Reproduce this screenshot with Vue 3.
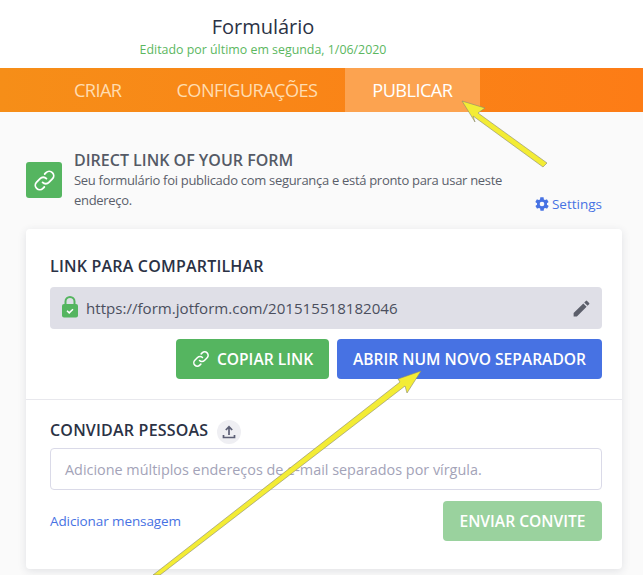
<template>
  <div class="page">
    <header class="top">
      <h1 class="form-title">Formulário</h1>
      <p class="form-edited">Editado por último em segunda, 1/06/2020</p>
    </header>

    <nav class="tabs">
      <a v-for="tab in tabs" :key="tab" class="tab" :class="{ active: tab === 'PUBLICAR' }">{{ tab }}</a>
    </nav>

    <main class="content">
      <section class="intro">
        <div class="intro-icon">
          <svg width="23" height="23" viewBox="0 0 24 24" fill="none" stroke="#fff" stroke-width="1.900" stroke-linecap="round">
            <path d="M10 14a4.600 4.600 0 0 0 6.600 0l3.600-3.600a4.600 4.600 0 0 0-6.600-6.600l-1.400 1.400" />
            <path d="M14 10a4.600 4.600 0 0 0-6.600 0l-3.600 3.600a4.600 4.600 0 0 0 6.600 6.600l1.400-1.400" />
          </svg>
        </div>
        <div class="intro-text">
          <h2>DIRECT LINK OF YOUR FORM</h2>
          <p>Seu formulário foi publicado com segurança e está pronto para usar neste endereço.</p>
        </div>
        <a class="settings">
          <svg width="16" height="16" viewBox="0 0 24 24" fill="#4772e3">
            <path d="M19.400 13c.1-.3.1-.7.1-1s0-.7-.1-1l2.100-1.600c.2-.2.3-.4.1-.7l-2-3.400c-.1-.2-.4-.3-.6-.2l-2.500 1c-.5-.4-1.100-.7-1.700-1l-.4-2.700c0-.2-.2-.4-.5-.4h-4c-.2 0-.5.2-.5.400l-.4 2.700c-.6.3-1.200.6-1.700 1l-2.500-1c-.2-.1-.5 0-.6.2l-2 3.400c-.1.300-.1.500.1.700L4.600 11c-.1.300-.1.700-.1 1s0 .7.1 1l-2.100 1.600c-.2.200-.3.400-.1.700l2 3.400c.1.200.4.300.6.200l2.500-1c.5.400 1.100.7 1.700 1l.4 2.700c0 .2.300.4.500.4h4c.3 0 .5-.2.5-.4l.4-2.700c.6-.3 1.200-.6 1.700-1l2.500 1c.2.100.5 0 .6-.2l2-3.400c.2-.3.100-.5-.1-.7L19.400 13zM12 15.500a3.500 3.500 0 1 1 0-7 3.500 3.500 0 0 1 0 7z" />
          </svg>
          Settings
        </a>
      </section>

      <section class="card">
        <div class="share">
          <h3 class="label">LINK PARA COMPARTILHAR</h3>
          <div class="url-box">
            <svg class="lock" width="18" height="24" viewBox="0 0 18 24">
              <path d="M4.500 10V6.500a4.500 4.500 0 0 1 9 0V10" fill="none" stroke="#55b560" stroke-width="2" />
              <rect x="1" y="9" width="16" height="13.500" rx="2" fill="#55b560" />
              <path d="M6 15.800l2.200 2.100 3.800-3.600" fill="none" stroke="#fff" stroke-width="1.500" />
            </svg>
            <span class="url">https://form.jotform.com/201515518182046</span>
            <svg class="pencil" width="21" height="21" viewBox="0 0 24 24" fill="#5c5f6b">
              <path d="M3 17.250V21h3.750L17.810 9.940l-3.750-3.750L3 17.250zM20.710 7.040a1 1 0 0 0 0-1.410l-2.340-2.340a1 1 0 0 0-1.410 0l-1.830 1.830 3.750 3.750 1.830-1.830z" />
            </svg>
          </div>
          <div class="share-actions">
            <button class="btn green">
              <svg width="18" height="18" viewBox="0 0 24 24" fill="none" stroke="#fff" stroke-width="2" stroke-linecap="round">
                <path d="M10 14a4.600 4.600 0 0 0 6.600 0l3.600-3.600a4.600 4.600 0 0 0-6.600-6.600l-1.400 1.400" />
                <path d="M14 10a4.600 4.600 0 0 0-6.600 0l-3.600 3.600a4.600 4.600 0 0 0 6.600 6.600l1.400-1.400" />
              </svg>
              COPIAR LINK
            </button>
            <button class="btn blue">ABRIR NUM NOVO SEPARADOR</button>
          </div>
        </div>

        <div class="invite">
          <div class="invite-head">
            <h3 class="label">CONVIDAR PESSOAS</h3>
            <span class="upload">
              <svg width="16" height="16" viewBox="0 0 16 16" fill="none" stroke="#5c5f75" stroke-width="1.700">
                <path d="M8 11V3M4.800 6L8 2.800 11.200 6" />
                <path d="M2.500 11v2.500h11V11" />
              </svg>
            </span>
          </div>
          <div class="email-box">Adicione múltiplos endereços de e-mail separados por vírgula.</div>
          <div class="invite-actions">
            <a class="add-message">Adicionar mensagem</a>
            <button class="btn send">ENVIAR CONVITE</button>
          </div>
        </div>
      </section>
    </main>

    <!-- yellow annotation arrows drawn over the screenshot -->
    <svg class="arrows" width="643" height="575" viewBox="0 0 643 575">
      <g fill="#f3ec35" stroke="#8a8a70" stroke-width="0.600">
        <path d="M462 101L485 108 478 113 547 163 543 167 473 116 475 122z" />
        <path d="M421 371L407 393 405 386 160 575 153 575 400 382 398 379z" />
      </g>
    </svg>
  </div>
</template>

<script setup>
const tabs = ['CRIAR', 'CONFIGURAÇÕES', 'PUBLICAR']
</script>

<style>
html, body {
  margin: 0;
  background: #fafafa;
}
</style>

<style scoped>
.page {
  position: relative;
  width: 643px;
  height: 575px;
  overflow: hidden;
  font-family: "Open Sans", "Noto Sans", sans-serif;
  background: #fafafa;
}

.top {
  height: 68px;
  background: #fff;
  padding: 13px 117px 0 0;
  box-sizing: border-box;
  text-align: center;
}

.form-title {
  margin: 0;
  font-size: 20px;
  font-weight: 400;
  line-height: 28px;
  color: #2b3245;
}

.form-edited {
  margin: 0;
  font-size: 12.400px;
  line-height: 18px;
  color: #5cb75f;
}

.tabs {
  display: flex;
  height: 44px;
  padding-left: 46.500px;
  background: linear-gradient(90deg, #f68e18, #fd7c16);
}

.tab {
  padding: 0 27.500px;
  font-size: 18.200px;
  line-height: 44px;
  color: #ffdcb0;
  letter-spacing: -0.600px;
}

.tab.active {
  background: #fca350;
  color: #fff;
}

.content {
  padding: 30px 21px 0 26px;
}

.intro {
  position: relative;
  display: flex;
  align-items: center;
  gap: 12px;
  height: 76px;
  margin-bottom: 11px;
  padding-right: 80px;
}

.intro-icon {
  flex: none;
  display: flex;
  align-items: center;
  justify-content: center;
  width: 36px;
  height: 36px;
  border-radius: 3px;
  background: #55b560;
}

.intro-text h2 {
  margin: 0;
  font-size: 16px;
  line-height: 20px;
  font-weight: 600;
  color: #555a66;
}

.intro-text p {
  margin: 0;
  font-size: 13px;
  line-height: 20px;
  color: #5a5f6b;
  letter-spacing: -0.300px;
}

.settings {
  position: absolute;
  right: 20px;
  bottom: 5px;
  display: flex;
  align-items: center;
  gap: 2px;
  font-size: 13.500px;
  color: #4772e3;
}

.card {
  background: #fff;
  border-radius: 4px;
  box-shadow: 0 2px 8px rgba(40, 50, 70, 0.12);
  height: 340px;
}

.share {
  height: 171px;
  padding: 27px 20px 0 24px;
  box-sizing: border-box;
  border-bottom: 1px solid #e8e8ed;
}

.label {
  margin: 0;
  font-size: 16px;
  line-height: 20px;
  font-weight: 600;
  color: #2b3245;
  letter-spacing: 0.200px;
}

.url-box {
  display: flex;
  align-items: center;
  height: 42px;
  margin-top: 11px;
  padding: 0 10px 0 11px;
  border-radius: 4px;
  background: #dfdfe7;
}

.lock {
  margin: -3px 7px 0 0;
}

.url {
  flex: 1;
  font-size: 15.100px;
  color: #4b4f5e;
}

.share-actions {
  display: flex;
  justify-content: flex-end;
  gap: 8px;
  margin-top: 10px;
}

.btn {
  display: flex;
  align-items: center;
  justify-content: center;
  height: 40px;
  border: 0;
  border-radius: 4px;
  font-family: inherit;
  font-size: 15.600px;
  font-weight: 600;
  color: #fff;
}

.green {
  gap: 7px;
  width: 153px;
  background: #55b560;
}

.blue {
  width: 265px;
  background: #4772e3;
}

.invite {
  padding: 20px 20px 0 24px;
}

.invite-head {
  display: flex;
  align-items: center;
  gap: 9px;
}

.invite-head .label {
  padding-bottom: 4px;
}

.upload {
  display: flex;
  align-items: center;
  justify-content: center;
  width: 24px;
  height: 24px;
  border-radius: 50%;
  background: #efeff3;
}

.email-box {
  height: 42px;
  margin-top: 4px;
  padding: 0 12px 0 14px;
  box-sizing: border-box;
  border: 1px solid #dadae8;
  border-radius: 4px;
  font-size: 14.400px;
  line-height: 41px;
  color: #a3a3b8;
}

.invite-actions {
  display: flex;
  align-items: center;
  justify-content: space-between;
  margin-top: 11px;
}

.add-message {
  font-size: 13.500px;
  color: #4772e3;
  letter-spacing: -0.100px;
}

.send {
  width: 159px;
  background: #9ad29e;
}

.arrows {
  position: absolute;
  left: 0;
  top: 0;
  pointer-events: none;
}
</style>
